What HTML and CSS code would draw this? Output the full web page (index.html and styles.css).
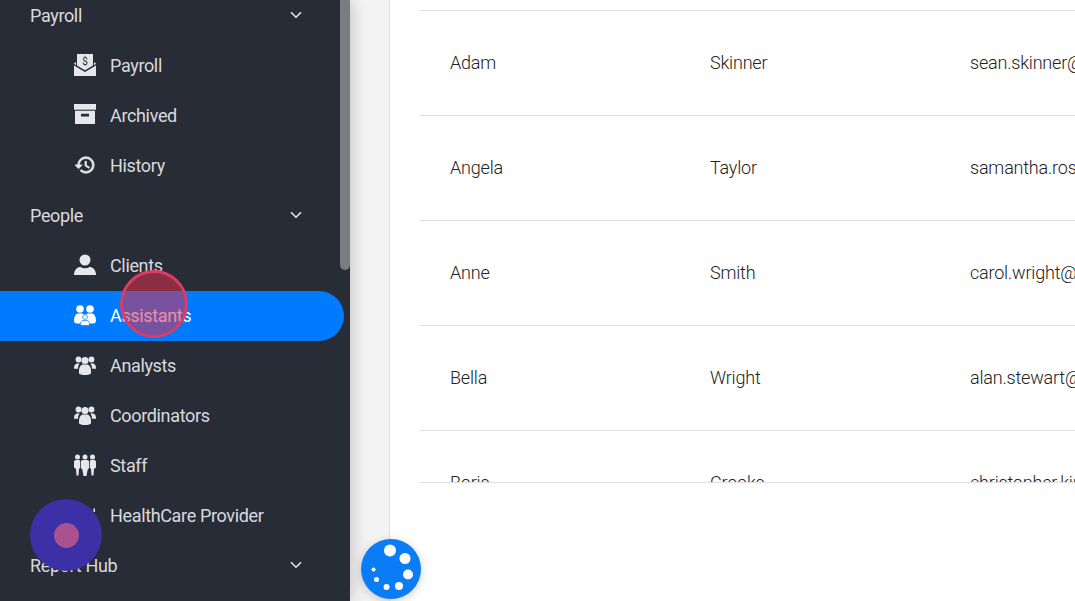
FILE: index.html
```html
<!DOCTYPE html>
<html lang="en">
<head>
    <meta charset="UTF-8">
    <meta name="viewport" content="width=device-width, initial-scale=1.0">
    <title>Assistants</title>
    <link rel="stylesheet" href="styles.css">
</head>
<body>
    <svg class="icon-defs" width="0" height="0">
        <symbol id="i-group" viewBox="0 0 22 22">
            <circle cx="4.5" cy="5.5" r="2.9"/>
            <circle cx="17.5" cy="5.5" r="2.9"/>
            <circle cx="11" cy="6.5" r="3.6"/>
            <path d="M0 14c0-3 1.500-4.500 3.500-4.500h2.200c-1.100 1.300-1.700 2.800-1.700 5.200H0zM22 14c0-3-1.500-4.500-3.500-4.500h-2.200c1.100 1.300 1.700 2.800 1.700 5.200H22z"/>
            <path d="M5 17c0-4 2-6.500 4-6.500h4c2 0 4 2.500 4 6.500v2.500c-3 2-9 2-12 0z"/>
        </symbol>
        <symbol id="i-chev" viewBox="0 0 12 8">
            <path d="M1 1.200l5 5 5-5" fill="none" stroke="#e6e7ea" stroke-width="1.600"/>
        </symbol>
    </svg>

    <aside class="sidebar">
        <ul class="side-menu">
            <li class="side-head">Payroll <svg class="chev"><use href="#i-chev"/></svg></li>
            <li class="side-item">
                <svg class="ico" viewBox="0 0 22 22">
                    <path d="M3 0h16v11.500l-8 4.800-8-4.800z"/>
                    <text x="11" y="10.500" class="ico-dollar">$</text>
                    <path d="M0 9.500l2-1.500v3.500zM22 9.500l-2-1.500v3.500zM0 11.500l11 6.500 11-6.500V22H0z"/>
                </svg>
                Payroll
            </li>
            <li class="side-item">
                <svg class="ico" viewBox="0 0 22 22">
                    <path d="M0 0h22v5.700H0z"/>
                    <path fill-rule="evenodd" d="M1 6.700h20V20H1zM7 9.700v2.700h8V9.700z"/>
                </svg>
                Archived
            </li>
            <li class="side-item">
                <svg class="ico" viewBox="0 0 24 24">
                    <path stroke="#e6e7ea" stroke-width="0.900" d="M13 3a9 9 0 0 0-9 9H1l3.890 3.890.07.14L9 12H6c0-3.870 3.130-7 7-7s7 3.130 7 7-3.130 7-7 7c-1.930 0-3.680-.79-4.940-2.060l-1.420 1.420A8.954 8.954 0 0 0 13 21a9 9 0 0 0 0-18zm-1 5v5l4.280 2.540.72-1.210-3.500-2.080V8H12z"/>
                </svg>
                History
            </li>
            <li class="side-head">People <svg class="chev"><use href="#i-chev"/></svg></li>
            <li class="side-item">
                <svg class="ico" viewBox="0 0 22 22">
                    <circle cx="11" cy="6" r="5.500"/>
                    <path d="M0 21c0-5.500 3.500-8 6.500-8 1.300.8 2.800 1.200 4.500 1.200s3.200-.4 4.500-1.200c3 0 6.500 2.500 6.500 8z"/>
                </svg>
                Clients
            </li>
            <li class="side-item active">
                <svg class="ico" viewBox="0 0 22 22">
                    <circle cx="6" cy="5" r="3.800"/>
                    <circle cx="16" cy="5" r="3.800"/>
                    <path d="M0 17c0-5 2-7.500 4-7.500h4c1 0 2 .5 3 1.500 1-1 2-1.500 3-1.500h4c2 0 4 2.500 4 7.500 0 2-2 2.500-4 2.500H4c-2 0-4-.5-4-2.500z"/>
                    <circle cx="11" cy="13" r="2.400" stroke="#007bff" stroke-width="0.700"/>
                    <path stroke="#007bff" stroke-width="0.700" d="M6.500 21v-1c0-2 1-3.500 2.500-3.500h4c1.500 0 2.500 1.500 2.500 3.500v1.500h-9z"/>
                </svg>
                Assistants
            </li>
            <li class="side-item">
                <svg class="ico"><use href="#i-group"/></svg>
                Analysts
            </li>
            <li class="side-item">
                <svg class="ico"><use href="#i-group"/></svg>
                Coordinators
            </li>
            <li class="side-item">
                <svg class="ico" viewBox="0 0 22 22">
                    <circle cx="3.500" cy="3" r="2.500"/>
                    <circle cx="11" cy="3" r="2.500"/>
                    <circle cx="18.500" cy="3" r="2.500"/>
                    <path d="M0 8c0-1.300.8-2 1.800-2h3.400c.5 0 .8.400.8 1v7l-1 1-.5 6.500H2.500L2 15l-2-1.500zM6.800 8c0-1.200.9-2 2-2h4.400c1.100 0 2 .8 2 2v6l-1.500 1.500-1.200 6.500H9.500l-1.200-6.500L6.800 14zM22 8c0-1.300-.8-2-1.800-2h-3.400c-.5 0-.8.400-.8 1v7l1 1 .5 6.500h2l.5-6.500 2-1.500z"/>
                </svg>
                Staff
            </li>
            <li class="side-item">
                <svg class="ico" viewBox="0 0 22 22">
                    <circle cx="9" cy="9" r="4"/>
                    <path d="M19.500 4.500h1.500V8h-1.500z"/>
                    <path d="M1 21c0-3.500 3-7 6-7h8c3 0 6 3.500 6 7z"/>
                </svg>
                HealthCare Provider
            </li>
            <li class="side-head">Report Hub <svg class="chev"><use href="#i-chev"/></svg></li>
        </ul>
        <div class="side-thumb"></div>
    </aside>

    <main class="main">
        <div class="content">
            <div class="table-wrap">
                <table class="people">
                    <tr><td>Adam</td><td>Skinner</td><td>sean.skinner@example.com</td></tr>
                    <tr><td>Angela</td><td>Taylor</td><td>samantha.ross@example.com</td></tr>
                    <tr><td>Anne</td><td>Smith</td><td>carol.wright@example.com</td></tr>
                    <tr><td>Bella</td><td>Wright</td><td>alan.stewart@example.com</td></tr>
                    <tr><td>Boris</td><td>Crooks</td><td>christopher.king@example.com</td></tr>
                </table>
            </div>
        </div>
    </main>

    <div class="click-ring"></div>
    <div class="rec-dot"><span></span></div>
    <div class="loader">
        <svg viewBox="-30 -30 60 60">
            <circle cx="-1" cy="-18.500" r="6"/>
            <circle cx="14" cy="-10.500" r="5.500"/>
            <circle cx="17" cy="5.500" r="5"/>
            <circle cx="8" cy="17" r="4"/>
            <circle cx="-4.500" cy="18" r="3"/>
            <circle cx="-14.500" cy="10.500" r="2.500"/>
            <circle cx="-17.500" cy="0.500" r="2"/>
        </svg>
    </div>
</body>
</html>
```

FILE: styles.css
```css
* { margin: 0; padding: 0; box-sizing: border-box; }
html, body { height: 100%; overflow: hidden; }
body { display: flex; font-family: Roboto, Arial, sans-serif; background: #f4f4f4; }
.icon-defs { position: absolute; }

.sidebar { position: relative; flex: 0 0 350px; height: 100%; background: #282c37; overflow: hidden; box-shadow: 0 0 18px rgba(0,0,0,.25); z-index: 2; }
.side-menu { list-style: none; margin-top: -9px; padding-right: 6px; }
.side-head { display: flex; align-items: center; justify-content: space-between; height: 50px; padding: 0 42px 2px 30px; font-size: 18px; letter-spacing: -0.35px; color: #d9dadd; }
.side-item { display: flex; align-items: center; gap: 14px; height: 50px; padding: 0 0 2px 74px; font-size: 18px; letter-spacing: -0.35px; color: #d9dadd; }
.side-item.active { background: #007bff; color: #fff; border-radius: 0 25px 25px 0; }
.ico { flex: 0 0 22px; width: 22px; height: 22px; fill: #e6e7ea; }
.active .ico { fill: #fff; }
.ico-dollar { font-family: Roboto, Arial, sans-serif; font-size: 10px; fill: #282c37; text-anchor: middle; }
.chev { width: 12px; height: 8px; }
.side-thumb { position: absolute; top: 0; right: 0; width: 10px; height: 270px; background: #7b7c82; border-radius: 0 0 5px 5px; }

.main { flex: 1; min-width: 0; padding-left: 39px; }
.content { height: 100%; padding: 10px 0 0 30px; background: #fff; border-left: 1px solid #e2e2e2; }
.table-wrap { height: 473px; border-bottom: 1px solid #e0e0e0; overflow: hidden; }
.people { border-collapse: collapse; table-layout: fixed; width: 780px; font-size: 18px; letter-spacing: -0.2px; font-weight: 300; color: #222; }
.people td { width: 260px; height: 105px; padding: 0 0 1px 30px; border-top: 1px solid #e0e0e0; white-space: nowrap; }

.click-ring { position: absolute; left: 120px; top: 270px; width: 68px; height: 68px; border-radius: 50%; border: 3px solid #dc3c64; background: rgba(220,50,80,.55); z-index: 5; }
.rec-dot { position: absolute; left: 30px; top: 499px; display: flex; align-items: center; justify-content: center; width: 72px; height: 72px; border-radius: 50%; background: #3b30a6; z-index: 5; }
.rec-dot span { width: 25px; height: 25px; border-radius: 50%; background: #a9528f; }
.loader { position: absolute; left: 361px; top: 539px; width: 60px; height: 60px; border-radius: 50%; background: #0a7cf5; box-shadow: 0 2px 10px rgba(0,0,0,.2); z-index: 5; }
.loader svg { display: block; width: 60px; height: 60px; fill: #fff; }
```
